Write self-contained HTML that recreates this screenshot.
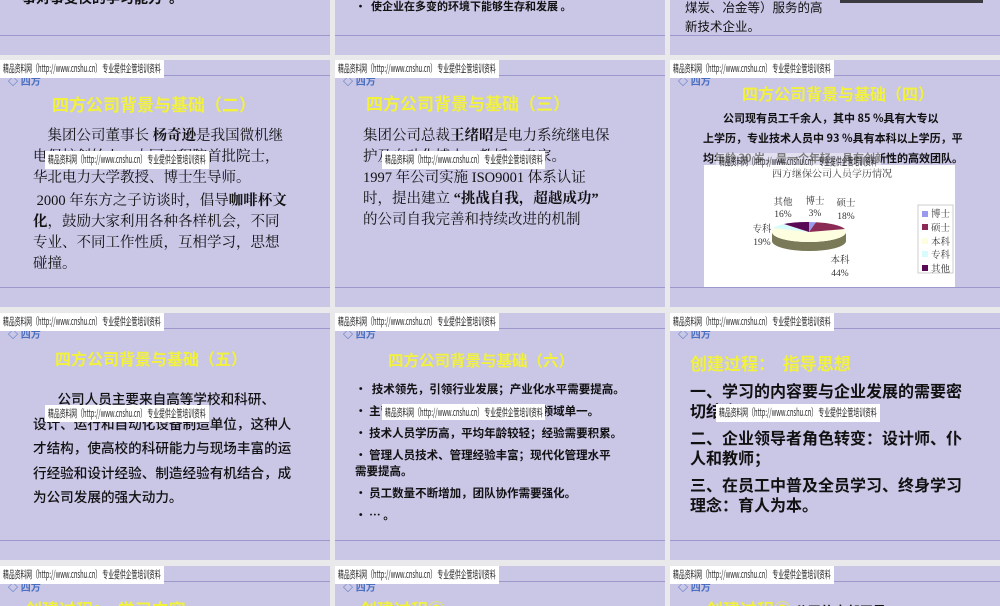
<!DOCTYPE html>
<html><head><meta charset="utf-8"><style>
*{margin:0;padding:0;box-sizing:border-box}
body{width:1000px;height:600px;position:relative;overflow:hidden;background:#e9e9ec;font-family:"Liberation Sans","Noto Sans CJK SC",sans-serif;color:#111}
.s{position:absolute;background:#c9c6e6;overflow:hidden}
.ln{position:absolute;left:0;right:0;height:1px;background:#9d98cc}
.a{position:absolute;white-space:nowrap}
.wm{position:absolute;background:#fff;height:18px;font-size:10.5px;line-height:18px;padding-left:3px;font-family:"Noto Sans CJK SC",sans-serif;color:#222;white-space:nowrap;overflow:hidden}
.wm span{display:inline-block;transform:scaleX(.555);transform-origin:left center}
.t{position:absolute;color:#f2f23a;font-weight:bold;font-family:"Noto Sans CJK SC",sans-serif;white-space:nowrap}
.logo{position:absolute;color:#4a6fc0;font-size:10px;font-weight:bold}
.serif{font-family:"Liberation Serif","Noto Serif CJK SC",serif}
.b{font-weight:bold;font-family:"Noto Sans CJK SC",sans-serif}
</style></head><body>

<!-- row1 -->
<div class="s" style="left:0;top:0;width:330px;height:55px"><div class="ln" style="top:35px"></div>
<div class="a b" style="left:22px;top:-12px;font-size:14px">事对事变仪的学习能力”。</div></div>
<div class="s" style="left:335px;top:0;width:330px;height:55px"><div class="ln" style="top:35px"></div>
<div class="a b" style="left:20px;top:-2px;font-size:11px">•&nbsp; 使企业在多变的环境下能够生存和发展 。</div></div>
<div class="s" style="left:670px;top:0;width:330px;height:55px"><div class="ln" style="top:35px"></div>
<div class="a" style="left:170px;top:0;width:143px;height:3px;background:#3a3a40"></div>
<div class="a" style="left:15px;top:-3px;font-size:12.5px;line-height:19px;font-family:'Noto Sans CJK SC',sans-serif">煤炭、冶金等）服务的高<br>新技术企业。</div></div>

<!-- row2 col1 -->
<div class="s" style="left:0;top:60px;width:330px;height:247px"><div class="ln" style="top:15px"></div><div class="ln" style="top:227px"></div>
<div class="logo" style="left:8px;top:13px">◇ 四方</div>
<div class="t" style="left:52px;top:31px;font-size:17px">四方公司背景与基础（二）</div>
<div class="a serif" style="left:33px;top:66px;font-size:14.5px;line-height:21px">&nbsp;&nbsp;&nbsp;&nbsp;集团公司董事长 <b>杨奇逊</b>是我国微机继<br>电保护创始人，中国工程院首批院士，<br>华北电力大学教授、博士生导师。</div>
<div class="a serif" style="left:33px;top:131px;font-size:14.5px;line-height:21px">&nbsp;2000 年东方之子访谈时，倡导<b>咖啡杯文</b><br><b>化</b>，鼓励大家利用各种各样机会，不同<br>专业、不同工作性质，互相学习，思想<br>碰撞。</div>
<div class="wm" style="left:45px;top:91px;width:164px"><span>精品资料网（http://www.cnshu.cn） 专业提供企管培训资料</span></div>
</div>
<div class="wm" style="left:0;top:60px;width:164px"><span>精品资料网（http://www.cnshu.cn） 专业提供企管培训资料</span></div>

<!-- row2 col2 -->
<div class="s" style="left:335px;top:60px;width:330px;height:247px"><div class="ln" style="top:15px"></div><div class="ln" style="top:227px"></div>
<div class="logo" style="left:8px;top:13px">◇ 四方</div>
<div class="t" style="left:31px;top:30px;font-size:17px">四方公司背景与基础（三）</div>
<div class="a serif" style="left:28px;top:66px;font-size:14.5px;line-height:21px">集团公司总裁<b>王绪昭</b>是电力系统继电保<br>护及自动化博士，教授、专家。<br>1997 年公司实施 ISO9001 体系认证<br>时，提出建立 <b>“挑战自我，超越成功”</b><br>的公司自我完善和持续改进的机制</div>
<div class="wm" style="left:47px;top:91px;width:163px"><span>精品资料网（http://www.cnshu.cn） 专业提供企管培训资料</span></div>
</div>
<div class="wm" style="left:335px;top:60px;width:164px"><span>精品资料网（http://www.cnshu.cn） 专业提供企管培训资料</span></div>

<!-- row2 col3 -->
<div class="s" style="left:670px;top:60px;width:330px;height:247px"><div class="ln" style="top:15px"></div><div class="ln" style="top:227px"></div>
<div class="logo" style="left:8px;top:13px">◇ 四方</div>
<div class="t" style="left:72px;top:21px;font-size:16px">四方公司背景与基础（四）</div>
<div class="a b" style="left:33px;top:48px;font-size:11px;line-height:20px">&nbsp;&nbsp;&nbsp;&nbsp;&nbsp;&nbsp;&nbsp;&nbsp;公司现有员工千余人，其中 85 %具有大专以<br>上学历，专业技术人员中 93 %具有本科以上学历，平<br>均年龄 30 岁，是一个年轻、具有创新性的高效团队。</div>
<div class="a" style="left:34px;top:105px;width:251px;height:122px;background:#fff">
<svg width="251" height="122" style="font-family:'Liberation Serif','Noto Serif CJK SC',serif">
<text x="128" y="12" font-size="10" text-anchor="middle" fill="#333">四方继保公司人员学历情况</text>
<path d="M68 67 v9 a37 10 0 0 0 74 0 v-9 a37 10 0 0 1 -74 0z" fill="#7a7a58"/>
<ellipse cx="105" cy="67" rx="37" ry="10" fill="#fdfde0"/>
<path d="M105 67 L105 57 A37 10 0 0 1 112 57.2 Z" fill="#9999ee"/>
<path d="M105 67 L112 57.2 A37 10 0 0 1 141 64 Z" fill="#8a2a55"/>
<path d="M105 67 L69 63 A37 10 0 0 1 80 59 Z" fill="#d8fbfb"/>
<path d="M105 67 L80 59 A37 10 0 0 1 105 57 Z" fill="#5a0a55"/>
<g font-size="9.5" fill="#333" text-anchor="middle">
<text x="79" y="40">其他</text><text x="79" y="52">16%</text>
<text x="111" y="39">博士</text><text x="111" y="51">3%</text>
<text x="142" y="41">硕士</text><text x="142" y="54">18%</text>
<text x="58" y="67">专科</text><text x="58" y="80">19%</text>
<text x="136" y="98">本科</text><text x="136" y="111">44%</text></g>
<rect x="214" y="40" width="35" height="68" fill="#fff" stroke="#ccc"/>
<g font-size="9.5" fill="#333">
<rect x="218" y="46" width="6" height="6" fill="#9999ee"/><text x="227" y="52">博士</text>
<rect x="218" y="59" width="6" height="6" fill="#8a2a55"/><text x="227" y="66">硕士</text>
<rect x="218" y="73" width="6" height="6" fill="#fdfde0"/><text x="227" y="80">本科</text>
<rect x="218" y="86" width="6" height="6" fill="#d8fbfb"/><text x="227" y="93">专科</text>
<rect x="218" y="100" width="6" height="6" fill="#5a0a55"/><text x="227" y="107">其他</text></g>
</svg></div>
<div class="wm" style="left:46px;top:93px;width:165px;background:rgba(255,255,255,.45)"><span>精品资料网（http://www.cnshu.cn） 专业提供企管培训资料</span></div>
</div>
<div class="wm" style="left:670px;top:60px;width:164px"><span>精品资料网（http://www.cnshu.cn） 专业提供企管培训资料</span></div>

<!-- row3 col1 -->
<div class="s" style="left:0;top:313px;width:330px;height:247px"><div class="ln" style="top:15px"></div><div class="ln" style="top:227px"></div>
<div class="logo" style="left:8px;top:13px">◇ 四方</div>
<div class="t" style="left:55px;top:33px;font-size:16px">四方公司背景与基础（五）</div>
<div class="a" style="left:33px;top:73px;font-size:13.6px;line-height:24.5px;font-family:'Noto Sans CJK SC',sans-serif;font-weight:500">&nbsp;&nbsp;&nbsp;&nbsp;&nbsp;&nbsp;&nbsp;&nbsp;公司人员主要来自高等学校和科研、<br>设计、运行和自动化设备制造单位，这种人<br>才结构，使高校的科研能力与现场丰富的运<br>行经验和设计经验、制造经验有机结合，成<br>为公司发展的强大动力。</div>
<div class="wm" style="left:45px;top:92px;width:164px;height:17px;line-height:17px"><span>精品资料网（http://www.cnshu.cn） 专业提供企管培训资料</span></div>
</div>
<div class="wm" style="left:0;top:313px;width:164px"><span>精品资料网（http://www.cnshu.cn） 专业提供企管培训资料</span></div>

<!-- row3 col2 -->
<div class="s" style="left:335px;top:313px;width:330px;height:247px"><div class="ln" style="top:15px"></div><div class="ln" style="top:227px"></div>
<div class="logo" style="left:8px;top:13px">◇ 四方</div>
<div class="t" style="left:53px;top:36px;font-size:15.5px">四方公司背景与基础（六）</div>
<div class="a b" style="left:20px;top:68px;font-size:11.5px;line-height:16px">
<div style="margin-bottom:6px">•&nbsp; 技术领先，引领行业发展；产业化水平需要提高。</div>
<div style="margin-bottom:6px">• 主营产品市场规模稳定发展；产品领域单一。</div>
<div style="margin-bottom:6px">• 技术人员学历高，平均年龄较轻；经验需要积累。</div>
<div style="margin-bottom:6px">• 管理人员技术、管理经验丰富；现代化管理水平<br>需要提高。</div>
<div style="margin-bottom:6px">• 员工数量不断增加，团队协作需要强化。</div>
<div>• … 。</div></div>
<div class="wm" style="left:47px;top:91px;width:163px;height:16px"><span>精品资料网（http://www.cnshu.cn） 专业提供企管培训资料</span></div>
</div>
<div class="wm" style="left:335px;top:313px;width:164px"><span>精品资料网（http://www.cnshu.cn） 专业提供企管培训资料</span></div>

<!-- row3 col3 -->
<div class="s" style="left:670px;top:313px;width:330px;height:247px"><div class="ln" style="top:15px"></div><div class="ln" style="top:227px"></div>
<div class="logo" style="left:8px;top:13px">◇ 四方</div>
<div class="t" style="left:20px;top:37px;font-size:17px">创建过程：&nbsp; 指导思想</div>
<div class="a b" style="left:20px;top:67px;font-size:16px;line-height:20px">
<div style="margin-bottom:7px">一、学习的内容要与企业发展的需要密<br>切结合；</div>
<div style="margin-bottom:7px">二、企业领导者角色转变：设计师、仆<br>人和教师；</div>
<div>三、在员工中普及全员学习、终身学习<br>理念：育人为本。</div></div>
<div class="wm" style="left:46px;top:91px;width:164px"><span>精品资料网（http://www.cnshu.cn） 专业提供企管培训资料</span></div>
</div>
<div class="wm" style="left:670px;top:313px;width:164px"><span>精品资料网（http://www.cnshu.cn） 专业提供企管培训资料</span></div>

<!-- row4 -->
<div class="s" style="left:0;top:566px;width:330px;height:40px"><div class="ln" style="top:15px"></div><div class="logo" style="left:8px;top:13px">◇ 四方</div><div class="t" style="left:25px;top:30px;font-size:17px">创建过程：&nbsp; 学习内容</div></div>
<div class="s" style="left:335px;top:566px;width:330px;height:40px"><div class="ln" style="top:15px"></div><div class="logo" style="left:8px;top:13px">◇ 四方</div><div class="t" style="left:25px;top:30px;font-size:17px">创建过程②</div></div>
<div class="s" style="left:670px;top:566px;width:330px;height:40px"><div class="ln" style="top:15px"></div><div class="logo" style="left:8px;top:13px">◇ 四方</div><div class="t" style="left:36px;top:30px;font-size:17px">创建过程③ <span style="color:#111;font-size:13px">公司的内部网是</span></div></div>
<div class="wm" style="left:0;top:566px;width:164px"><span>精品资料网（http://www.cnshu.cn） 专业提供企管培训资料</span></div>
<div class="wm" style="left:335px;top:566px;width:164px"><span>精品资料网（http://www.cnshu.cn） 专业提供企管培训资料</span></div>
<div class="wm" style="left:670px;top:566px;width:164px"><span>精品资料网（http://www.cnshu.cn） 专业提供企管培训资料</span></div>
</body></html>
